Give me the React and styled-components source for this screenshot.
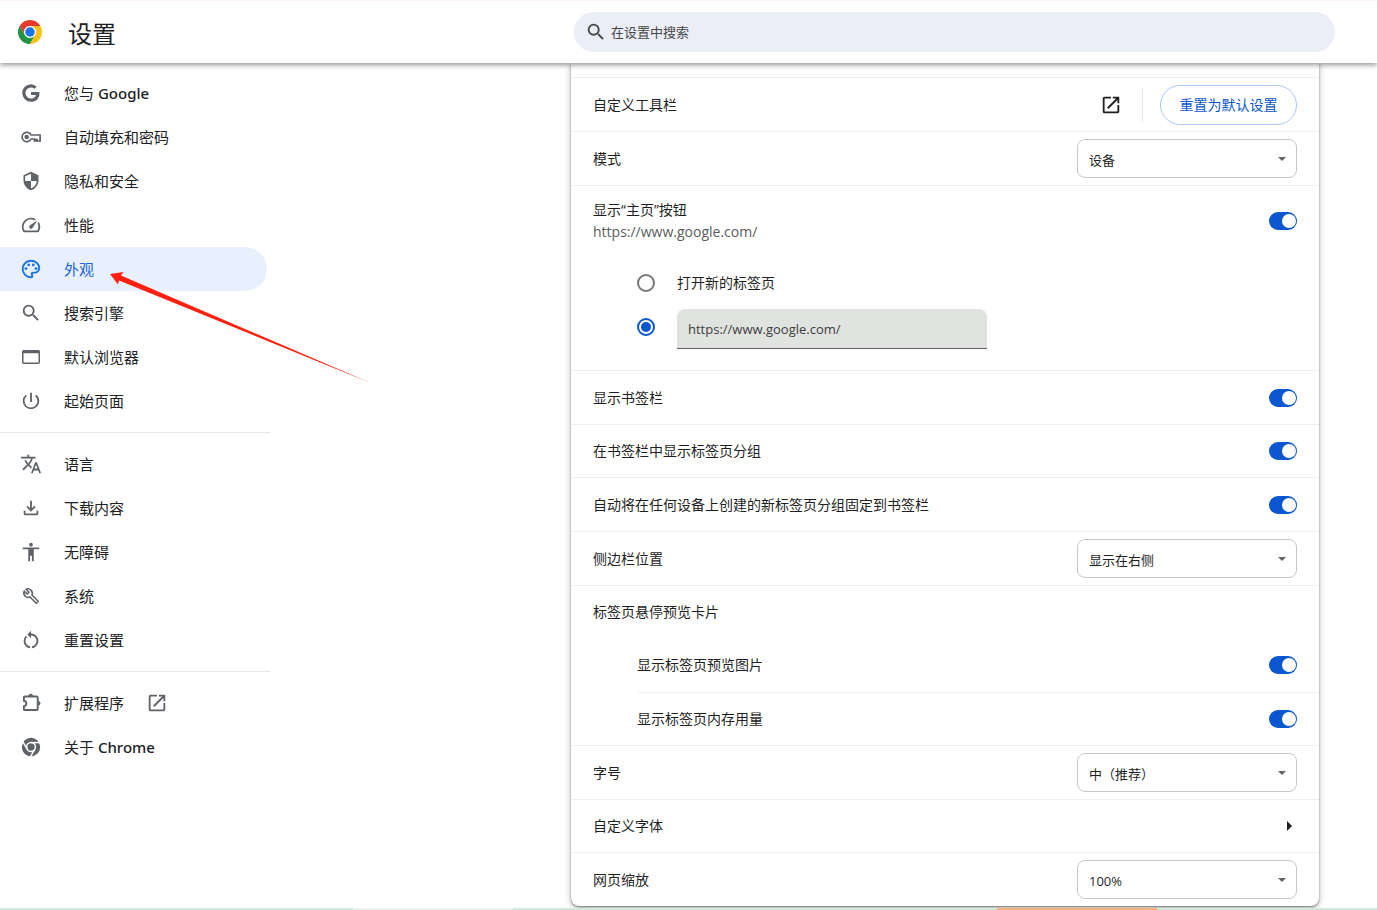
import React, { useState } from 'react';
import styled, { createGlobalStyle, css } from 'styled-components';
import {
  MdSecurity,
  MdOutlineSpeed,
  MdOutlinePalette,
  MdSearch,
  MdPowerSettingsNew,
  MdTranslate,
  MdOutlineFileDownload,
  MdAccessibility,
  MdRestartAlt,
  MdOpenInNew,
} from 'react-icons/md';

const GlobalStyle = createGlobalStyle`
  * {
    box-sizing: border-box;
  }

  body {
    margin: 0;
    background: #fff;
    color: #1f1f1f;
  }

  body, button, input, select {
    font-family: 'Open Sans', 'Noto Sans CJK SC', sans-serif;
  }
`;

const Page = styled.div`
  display: flex;
  flex-direction: column;
  min-height: 100vh;
`;

const Header = styled.header`
  display: flex;
  align-items: center;
  position: relative;
  z-index: 2;
  height: 63px;
  padding: 0 42px 0 18px;
  border-top: 1px solid #fff3f0;
  background: #fff;
  box-shadow: 0 2px 5px rgba(0, 0, 0, 0.42);
`;

const Title = styled.h1`
  flex: 1;
  margin: 0;
  padding: 4px 0 0 26px;
  font-size: 24px;
  line-height: 32px;
  font-weight: 400;
  white-space: nowrap;
  color: #202124;
`;

const SearchBox = styled.label`
  display: flex;
  align-items: center;
  gap: 4px;
  flex: 0 1 761px;
  height: 40px;
  padding: 0 11px;
  border-radius: 20px;
  background: #ebeef7;
  color: #474747;
`;

const SearchInput = styled.input`
  flex: 1;
  min-width: 0;
  padding: 0;
  border: 0;
  outline: 0;
  background: transparent;
  font-size: 13px;
  line-height: 20px;

  &::placeholder {
    color: #474747;
    opacity: 1;
  }
`;

const Body = styled.div`
  display: flex;
  flex: 1;
`;

const Sidebar = styled.nav`
  flex: 0 0 270px;
  padding-top: 8px;
`;

const NavItem = styled.a`
  display: flex;
  align-items: center;
  gap: 22px;
  position: relative;
  height: 44px;
  margin-right: 3px;
  padding-left: 20px;
  border-radius: 0 22px 22px 0;
  font-size: 15px;
  line-height: 22px;
  color: #202124;
  text-decoration: none;

  ${({ $active }) =>
    $active &&
    css`
      background: #e8f0fe;
      color: #1967d2;
    `}
`;

const NavIcon = styled.span`
  display: flex;
  align-items: center;
  justify-content: center;
  width: 22px;
  height: 22px;
  color: ${({ $active }) => ($active ? '#1a73e8' : '#5f6368')};
`;

const Latin = styled.span`
  font-family: 'Noto Sans', sans-serif;
  font-weight: 500;
`;

const External = styled.span`
  display: flex;
  color: #5f6368;
`;

const NavDivider = styled.hr`
  height: 1px;
  margin: 9px 0;
  border: 0;
  background: #e6e6e6;
`;

const ArrowMark = styled.svg`
  position: absolute;
  z-index: 1;
  top: 25px;
  left: 110px;
  pointer-events: none;
`;

const Main = styled.main`
  display: flex;
  justify-content: flex-end;
  flex: 1;
  min-width: 0;
  padding: 0 58px 2px 24px;
`;

const Card = styled.section`
  flex: 0 1 748px;
  align-self: flex-start;
  padding-top: 14px;
  border-radius: 0 0 8px 8px;
  background: #fff;
  box-shadow: 0 1px 2px rgba(0, 0, 0, 0.45), 0 2px 6px 1px rgba(0, 0, 0, 0.2);
`;

const Row = styled.div`
  display: flex;
  align-items: center;
  min-height: ${({ $compact }) => ($compact ? 53 : 54)}px;
  margin-left: ${({ $nested }) => ($nested ? 66 : 0)}px;
  padding: 0 22px 0 ${({ $nested }) => ($nested ? 0 : 22)}px;
  border-top: ${({ $plain }) => ($plain ? 0 : '1px solid #efefef')};
  font-size: 14px;
  line-height: 22px;
`;

const RowLabel = styled.label`
  flex: 1;
`;

const HomeRow = styled(Row)`
  padding-top: 13px;
  padding-bottom: 13px;
`;

const SubText = styled.div`
  color: #5a5d5c;
`;

const Toggle = styled.input.attrs({ type: 'checkbox', role: 'switch' })`
  appearance: none;
  display: flex;
  align-items: center;
  flex: none;
  width: 28px;
  height: 18px;
  margin: 0;
  padding: 0 1px;
  border-radius: 9px;
  background: #747775;
  cursor: pointer;

  &::before {
    content: '';
    width: 14px;
    height: 14px;
    border-radius: 50%;
    background: #fff;
  }

  &:checked {
    justify-content: flex-end;
    background: #0b57d0;
  }
`;

const IconButton = styled.button`
  display: flex;
  padding: 0;
  border: 0;
  background: none;
  color: #1f1f1f;
  cursor: pointer;
`;

const Separator = styled.span`
  width: 1px;
  height: 35px;
  margin: 0 17px 0 20px;
  background: #e8e8e8;
`;

const ResetButton = styled.button`
  min-width: 137px;
  height: 40px;
  padding: 0 18px 2px;
  border: 1px solid #a8c7fa;
  border-radius: 20px;
  background: #fff;
  font-size: 14px;
  color: #0b57d0;
  cursor: pointer;
`;

const SelectWrap = styled.div`
  display: grid;
  align-items: center;
  width: 220px;

  > * {
    grid-area: 1 / 1;
  }
`;

const Select = styled.select`
  appearance: none;
  height: 39px;
  padding: 2px 28px 0 11px;
  border: 1px solid #c7c7c7;
  border-radius: 8px;
  background: #fff;
  font-size: 13px;
  color: #1f1f1f;
`;

const SelectArrow = styled.svg`
  justify-self: end;
  margin-right: 11px;
  fill: #5f6368;
  pointer-events: none;
`;

const RadioList = styled.div`
  padding: 5px 22px 21px 66px;
  font-size: 14px;
  line-height: 22px;
`;

const RadioRow = styled.div`
  display: flex;
  align-items: center;
  gap: 22px;
  height: 44px;
`;

const Radio = styled.input.attrs({ type: 'radio' })`
  appearance: none;
  display: grid;
  place-items: center;
  flex: none;
  width: 18px;
  height: 18px;
  margin: 0;
  border: 2px solid #747775;
  border-radius: 50%;

  &:checked {
    border-color: #0b57d0;
  }

  &:checked::before {
    content: '';
    width: 10px;
    height: 10px;
    border-radius: 50%;
    background: #0b57d0;
  }
`;

const UrlInput = styled.input`
  align-self: flex-end;
  flex: 0 1 310px;
  min-width: 0;
  height: 40px;
  padding: 0 11px;
  border: 0;
  border-bottom: 1px solid #5f6361;
  border-radius: 8px 8px 0 0;
  outline: 0;
  background: #e1e3e1;
  font-size: 13px;
  color: #3c3e3d;
`;

const BottomStrip = styled.div`
  display: grid;
  grid-template-columns: 353fr 160px 484fr 160px 220fr;
  height: 2px;
`;

const StripPart = styled.span`
  background: ${({ $color }) => $color};
`;

const ChromeLogo = () => (
  <svg width="24" height="24" viewBox="0 0 48 48" aria-hidden="true">
    <circle cx="24" cy="24" r="12" fill="#fff" />
    <path fill="#e33b2e" d="M24 12h20.78a23.99 23.99 0 0 0-41.56 0l10.39 18h.01A11.99 11.99 0 0 1 24 12z" />
    <path fill="#229342" d="M13.61 30 3.22 12.01A23.99 23.99 0 0 0 24 48l10.39-18a11.99 11.99 0 0 1-20.78 0z" />
    <path fill="#fbc116" d="M34.39 30 24 48a23.99 23.99 0 0 0 20.78-36H24a11.99 11.99 0 0 1 10.39 18z" />
    <circle cx="24" cy="24" r="9.5" fill="#1a73e8" />
  </svg>
);

const GoogleIcon = () => (
  <svg width="22" height="22" viewBox="-1 -1 20 20" fill="currentColor">
    <path d="M16.58 8H9v2.75h4.47c-.24 1.2-1.42 3.27-4.47 3.27A5 5 0 0 1 9 4a4.44 4.44 0 0 1 3.07 1.22l2.09-2A7.9 7.9 0 0 0 9 1a8 8 0 1 0 0 16c4.63 0 7.7-3.26 7.7-7.84A7.08 7.08 0 0 0 16.58 8z" />
  </svg>
);

const KeyIcon = () => (
  <svg width="22" height="22" viewBox="0 0 22 22" fill="none" stroke="currentColor" strokeWidth="1.7">
    <path d="M11 9A4.7 4.7 0 1 0 11 13h3.4v2h1.3v-1.5h1.3V15h3.1V9z" />
    <circle cx="6.7" cy="11" r="2.3" fill="currentColor" stroke="none" />
  </svg>
);

const BrowserIcon = () => (
  <svg width="22" height="22" viewBox="0 0 22 22" fill="none" stroke="currentColor" strokeWidth="1.5">
    <rect x="2.75" y="4.75" width="16.5" height="12.5" rx="1" />
    <path d="M2.5 6h17" strokeWidth="2.5" />
  </svg>
);

const WrenchIcon = () => (
  <svg width="22" height="22" viewBox="0 0 22 22" fill="none" stroke="currentColor" strokeWidth="1.6" strokeLinejoin="round">
    <path d="M4.2 6 7.2 9 9 7.2 6 4.2A4.5 4.5 0 0 1 12 10l6.2 6.2-2 2L10 12A4.5 4.5 0 0 1 4.2 6z" />
  </svg>
);

const ExtensionIcon = () => (
  <svg width="22" height="22" viewBox="0 0 22 22" fill="none" stroke="currentColor" strokeWidth="1.9">
    <path d="M4.5 4.5h12.2a1 1 0 0 1 1 1V17a1 1 0 0 1-1 1H4.5a.6.6 0 0 1-.6-.6v-3.3c1.5-.3 2.4-1.3 2.4-2.7s-.9-2.4-2.4-2.7V5.1a.6.6 0 0 1 .6-.6z" />
    <path stroke="none" fill="currentColor" d="M8.4 4a2.3 2.3 0 0 1 4.6 0zM18.2 9a2.3 2.3 0 0 1 0 4.6z" />
  </svg>
);

const ChromeMonoIcon = () => (
  <svg width="22" height="22" viewBox="0 0 22 22" fill="none" stroke="#fff" strokeWidth="1.5">
    <circle cx="11" cy="11" r="9.2" fill="currentColor" stroke="none" />
    <circle cx="11" cy="11" r="4.4" />
    <path d="M11 6.6h10" />
    <path d="M11 6.6h10" transform="rotate(120 11 11)" />
    <path d="M11 6.6h10" transform="rotate(240 11 11)" />
  </svg>
);

const navGroups = [
  [
    { icon: <GoogleIcon />, text: '您与', latin: 'Google' },
    { icon: <KeyIcon />, text: '自动填充和密码' },
    { icon: <MdSecurity size={20} />, text: '隐私和安全' },
    { icon: <MdOutlineSpeed size={22} />, text: '性能' },
    { icon: <MdOutlinePalette size={22} />, text: '外观', active: true },
    { icon: <MdSearch size={22} />, text: '搜索引擎' },
    { icon: <BrowserIcon />, text: '默认浏览器' },
    { icon: <MdPowerSettingsNew size={22} />, text: '起始页面' },
  ],
  [
    { icon: <MdTranslate size={22} />, text: '语言' },
    { icon: <MdOutlineFileDownload size={22} />, text: '下载内容' },
    { icon: <MdAccessibility size={22} />, text: '无障碍' },
    { icon: <WrenchIcon />, text: '系统' },
    { icon: <MdRestartAlt size={22} />, text: '重置设置' },
  ],
  [
    { icon: <ExtensionIcon />, text: '扩展程序', external: true },
    { icon: <ChromeMonoIcon />, text: '关于', latin: 'Chrome' },
  ],
];

const stripColors = ['#cfe9da', '#eaf5f1', '#cfe9da', '#f7b27a', '#cfe9da'];

const Pointer = () => (
  <ArrowMark width="264" height="114" viewBox="0 0 264 114" aria-hidden="true">
    <defs>
      <linearGradient id="pointerFade" x1="0" x2="1">
        <stop offset="0.9" stopColor="#ff2010" />
        <stop offset="1" stopColor="#ff2010" stopOpacity="0.7" />
      </linearGradient>
    </defs>
    <path fill="url(#pointerFade)" d="M0 2 13.5 0 11 3.5 263 112 9 8.5 8 12.5z" />
  </ArrowMark>
);

const ToggleRow = ({ id, label, ...rest }) => {
  const [on, setOn] = useState(true);
  return (
    <Row {...rest}>
      <RowLabel htmlFor={id}>{label}</RowLabel>
      <Toggle id={id} checked={on} onChange={() => setOn(!on)} />
    </Row>
  );
};

const SelectRow = ({ id, label, options }) => (
  <Row>
    <RowLabel htmlFor={id}>{label}</RowLabel>
    <SelectWrap>
      <Select id={id}>
        {options.map((option) => (
          <option key={option}>{option}</option>
        ))}
      </Select>
      <SelectArrow width="8" height="4" viewBox="0 0 8 4">
        <path d="M0 0h8L4 4z" />
      </SelectArrow>
    </SelectWrap>
  </Row>
);

const App = () => {
  const [homeOn, setHomeOn] = useState(true);
  const [homePage, setHomePage] = useState('custom');
  const [url, setUrl] = useState('https://www.google.com/');

  return (
    <Page>
      <GlobalStyle />
      <Header>
        <ChromeLogo />
        <Title>设置</Title>
        <SearchBox>
          <MdSearch size={22} />
          <SearchInput type="search" placeholder="在设置中搜索" aria-label="在设置中搜索" />
        </SearchBox>
      </Header>
      <Body>
        <Sidebar>
          {navGroups.map((group, index) => (
            <React.Fragment key={index}>
              {index > 0 && <NavDivider />}
              {group.map((item) => (
                <NavItem key={item.text} href="#" $active={item.active}>
                  <NavIcon $active={item.active}>{item.icon}</NavIcon>
                  <span>
                    {item.text}
                    {item.latin && <Latin> {item.latin}</Latin>}
                  </span>
                  {item.external && (
                    <External>
                      <MdOpenInNew size={22} />
                    </External>
                  )}
                  {item.active && <Pointer />}
                </NavItem>
              ))}
            </React.Fragment>
          ))}
        </Sidebar>
        <Main>
          <Card>
            <Row>
              <RowLabel as="span">自定义工具栏</RowLabel>
              <IconButton aria-label="自定义工具栏">
                <MdOpenInNew size={22} />
              </IconButton>
              <Separator />
              <ResetButton>重置为默认设置</ResetButton>
            </Row>
            <SelectRow id="mode" label="模式" options={['设备', '浅色', '深色']} />
            <HomeRow>
              <RowLabel htmlFor="home">
                显示“主页”按钮
                <SubText>https://www.google.com/</SubText>
              </RowLabel>
              <Toggle id="home" checked={homeOn} onChange={() => setHomeOn(!homeOn)} />
            </HomeRow>
            <RadioList>
              <RadioRow>
                <Radio
                  id="newTab"
                  name="homePage"
                  checked={homePage === 'newTab'}
                  onChange={() => setHomePage('newTab')}
                />
                <label htmlFor="newTab">打开新的标签页</label>
              </RadioRow>
              <RadioRow>
                <Radio
                  name="homePage"
                  aria-label="自定义网址"
                  checked={homePage === 'custom'}
                  onChange={() => setHomePage('custom')}
                />
                <UrlInput
                  type="text"
                  aria-label="自定义网址"
                  value={url}
                  onChange={(e) => setUrl(e.target.value)}
                />
              </RadioRow>
            </RadioList>
            <ToggleRow id="bookmarks" label="显示书签栏" />
            <ToggleRow id="groups" label="在书签栏中显示标签页分组" $compact />
            <ToggleRow id="pinGroups" label="自动将在任何设备上创建的新标签页分组固定到书签栏" />
            <SelectRow id="sidePanel" label="侧边栏位置" options={['显示在右侧', '显示在左侧']} />
            <Row $compact>标签页悬停预览卡片</Row>
            <ToggleRow id="previewImages" label="显示标签页预览图片" $nested $plain />
            <ToggleRow id="memoryUsage" label="显示标签页内存用量" $compact $nested />
            <SelectRow id="fontSize" label="字号" options={['中（推荐）', '小', '大']} />
            <Row $compact>
              <RowLabel as="span">自定义字体</RowLabel>
              <IconButton aria-label="自定义字体">
                <svg width="14" height="22" viewBox="0 0 14 22" fill="currentColor">
                  <path d="M4 6l5 5-5 5z" />
                </svg>
              </IconButton>
            </Row>
            <SelectRow id="zoom" label="网页缩放" options={['100%', '125%', '150%']} />
          </Card>
        </Main>
      </Body>
      <BottomStrip>
        {stripColors.map((color, index) => (
          <StripPart key={index} $color={color} />
        ))}
      </BottomStrip>
    </Page>
  );
};

export default App;
